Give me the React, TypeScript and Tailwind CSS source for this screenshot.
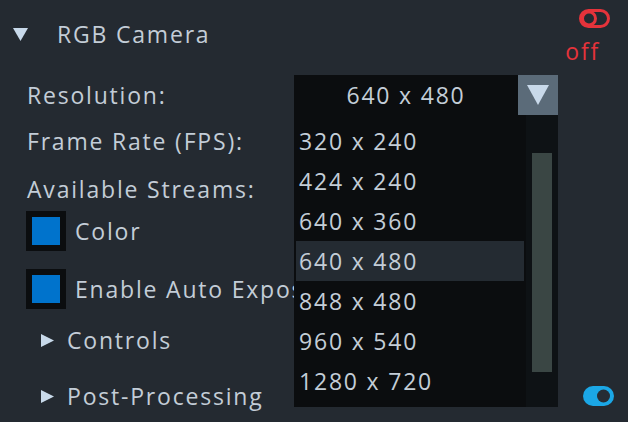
import React from "react";

const resolutions = [
  "320 x 240",
  "424 x 240",
  "640 x 360",
  "640 x 480",
  "848 x 480",
  "960 x 540",
  "1280 x 720",
];

// small triangles used for the tree nodes
const TriDown = () => (
  <svg width="15" height="13" viewBox="0 0 15 13">
    <polygon points="0,0 15,0 7.5,13" fill="#c8d9ea" />
  </svg>
);

const TriRight = () => (
  <svg width="13" height="13" viewBox="0 0 13 13">
    <polygon points="0,0 13,6.5 0,13" fill="#c8d9ea" />
  </svg>
);

const Checkbox = () => (
  <div className="w-[40px] h-[40px] bg-[#0b0d0f] p-[6px] shrink-0">
    <div className="w-full h-full bg-[#0073cc]" />
  </div>
);

const ResolutionCombo = () => {
  const selected = "640 x 480";
  return (
    <div className="relative flex w-[264px] h-[40px]">
      <div className="flex-1 bg-[#0b0d0f] flex items-center justify-center">
        {selected}
      </div>
      <div className="w-[40px] h-[40px] bg-[#5b6b79] flex items-center justify-center">
        <svg width="22" height="20" viewBox="0 0 22 20">
          <polygon points="0,0 22,0 11,20" fill="#c8d9ea" />
        </svg>
      </div>

      {/* open popup list */}
      <div className="absolute left-0 top-[40px] z-10 w-[264px] h-[292px] flex">
        <div className="w-[232px] h-full bg-[#0b0d0f] pt-[6px] px-[2px]">
          {resolutions.map((r) => (
            <div
              key={r}
              className={`h-[40px] flex items-center pl-[3px] ${
                r === selected ? "bg-[#242b32]" : ""
              }`}
            >
              {r}
            </div>
          ))}
        </div>
        <div className="w-[32px] h-full bg-[#0e1215] pt-[38px] pl-[6px]">
          <div className="w-[20px] h-[219px] bg-[#3a4644]" />
        </div>
      </div>
    </div>
  );
};

export default function App() {
  return (
    <div
      className="w-[628px] h-[422px] bg-[#242a31] text-[#c3cdd7] text-[23px] tracking-[1.8px] overflow-hidden"
      style={{ fontFamily: "'Open Sans', 'Noto Sans', sans-serif" }}
    >
      {/* header */}
      <div className="flex justify-between h-[75px] pl-[13px] pr-[18px]">
        <div className="flex items-center gap-[29px] h-[24px] mt-[22px]">
          <TriDown />
          <span className="leading-none">RGB Camera</span>
        </div>
        <div className="flex flex-col items-end pt-[9px]">
          <svg width="31" height="19" viewBox="0 0 31 19">
            <rect x="1.5" y="1.5" width="28" height="16" rx="8" fill="none" stroke="#e5333b" strokeWidth="3" />
            <circle cx="10" cy="9.5" r="6.5" fill="none" stroke="#e5333b" strokeWidth="3" />
          </svg>
          <span className="leading-none mt-[12px] mr-[10px] text-[#e5333b]">off</span>
        </div>
      </div>

      {/* resolution */}
      <div className="flex items-center h-[40px]">
        <span className="w-[294px] pl-[27px]">Resolution:</span>
        <ResolutionCombo />
      </div>

      <div className="flex items-center h-[52px] pl-[27px]">Frame Rate (FPS):</div>
      <div className="flex items-center h-[44px] pl-[27px]">Available Streams:</div>

      <div className="flex items-center gap-[9px] h-[40px] pl-[26px]">
        <Checkbox />
        <span>Color</span>
      </div>
      <div className="flex items-center gap-[9px] h-[40px] pl-[26px] mt-[18px] whitespace-nowrap">
        <Checkbox />
        <span>Enable Auto Exposure</span>
      </div>

      <div className="flex items-center gap-[13px] h-[40px] pl-[41px] mt-[11px]">
        <TriRight />
        <span>Controls</span>
      </div>
      <div className="flex items-center justify-between h-[40px] pl-[41px] pr-[14px] mt-[16px]">
        <div className="flex items-center gap-[13px]">
          <TriRight />
          <span>Post-Processing</span>
        </div>
        <svg width="31" height="20" viewBox="0 0 31 20">
          <rect x="0" y="0" width="31" height="20" rx="10" fill="#1ba7e6" />
          <circle cx="20.5" cy="10" r="6.5" fill="#262d35" />
        </svg>
      </div>
    </div>
  );
}
